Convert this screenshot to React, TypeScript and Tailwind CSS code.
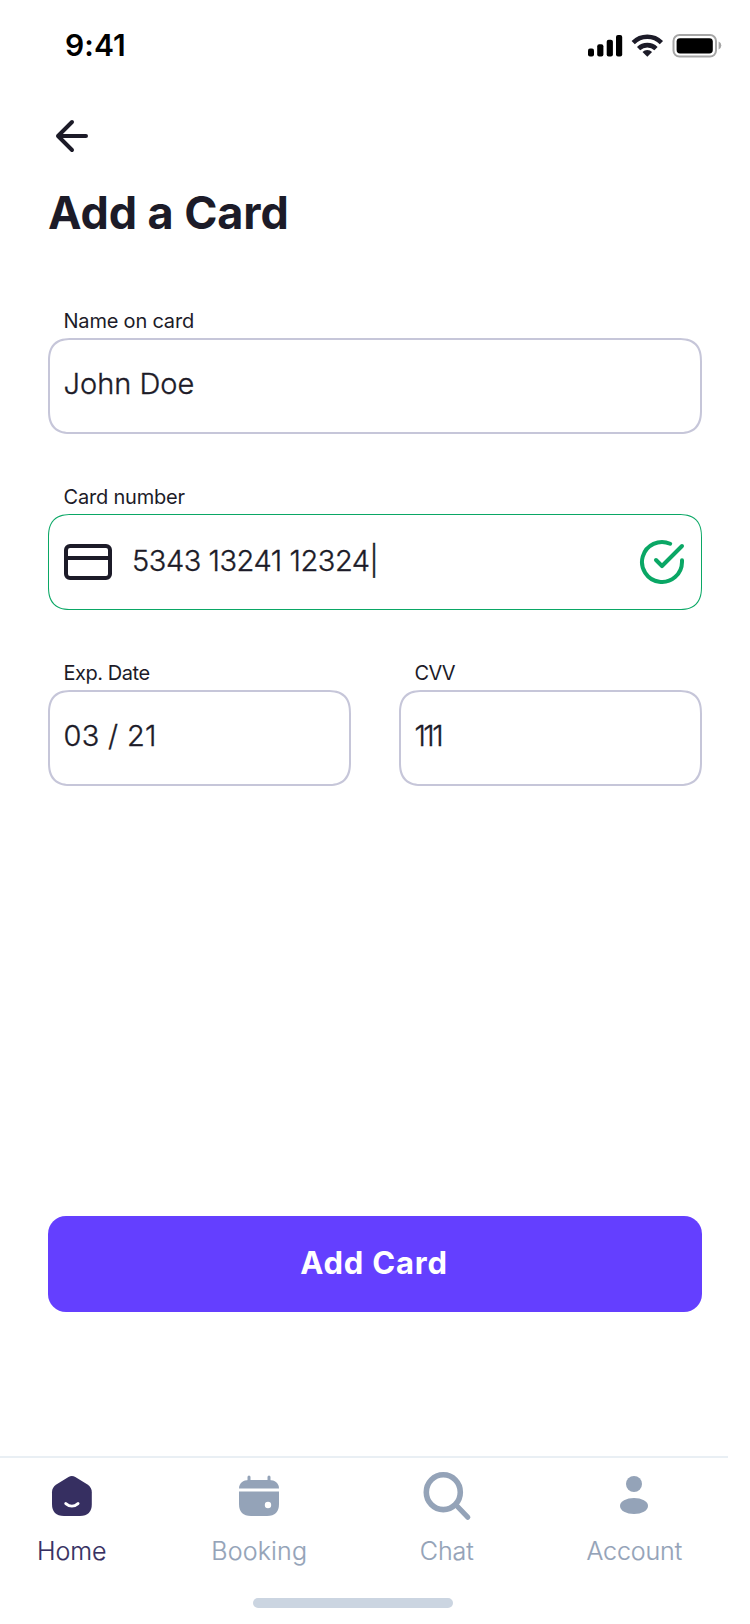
import type { ReactNode } from "react";

function StatusIcons() {
  return (
    <svg className="mt-0.5 h-6 w-[134px]" viewBox="588 34 134 24">
      <rect x="588" y="48.5" width="6" height="8" rx="2" />
      <rect x="597.2" y="44.2" width="6.2" height="12.3" rx="2" />
      <rect x="606.7" y="39.8" width="6.2" height="16.7" rx="2" />
      <rect x="616" y="35" width="6.2" height="21.5" rx="2" />
      <g fill="none" stroke="#1c1b28" strokeWidth="4.6">
        <path d="M633.2 42.6a20 20 0 0 1 28.2 0" />
        <path d="M638.6 48.6a12.5 12.5 0 0 1 17.4 0" />
      </g>
      <path d="M647.3 56.8l-4.8-4.8a6.6 6.6 0 0 1 9.6 0z" fill="#1c1b28" />
      <rect x="673.5" y="35" width="42.5" height="21.6" rx="6" fill="none" stroke="#a6a6a6" strokeWidth="2" />
      <rect x="676.6" y="38.2" width="36.2" height="15.2" rx="3.4" />
      <path d="M718.6 41.6a4.3 4.3 0 0 1 0 8z" fill="#a6a6a6" />
    </svg>
  );
}

function Field({ label, children, tracking = "-tracking-[0.2px]", box = "border-2 border-[#c6c6d9]", className = "" }: { label: string; children: ReactNode; tracking?: string; box?: string; className?: string }) {
  return (
    <div className={className}>
      <div className={`mb-1 pl-[15.5px] text-[20px] leading-[26px] ${tracking}`}>{label}</div>
      <div className={`flex h-24 items-center rounded-[24px] text-[29px] font-light [corner-shape:superellipse(1.4)] [-webkit-text-stroke:0.35px_currentColor] ${box}`}>{children}</div>
    </div>
  );
}

function Tab({ label, color = "text-[#94a3b8]", tracking = "tracking-normal", children }: { label: string; color?: string; tracking?: string; children: ReactNode }) {
  return (
    <div className={`flex w-[143.5px] flex-col items-center ${color}`}>
      <svg className="size-12 overflow-visible" viewBox="0 0 48 48" fill="currentColor">{children}</svg>
      <div className={`mt-[15px] text-[25px] leading-8 font-light whitespace-nowrap [-webkit-text-stroke:0.2px_currentColor] ${tracking}`}>{label}</div>
    </div>
  );
}

export default function App() {
  return (
    <div className="flex h-[1624px] w-[750px] flex-col overflow-hidden bg-white font-['Inter',sans-serif] text-[#1c1b28]">
      <header className="flex h-[90px] items-center justify-between pr-7 pl-[65px] text-black">
        <span className="text-[30px] leading-9 font-semibold tracking-[0.1px]">9:41</span>
        <StatusIcons />
      </header>

      <main className="flex flex-col px-12 pt-[22px]">
        <svg className="size-12" viewBox="0 0 24 24" fill="none" stroke="currentColor" strokeWidth="2" strokeLinecap="round" strokeLinejoin="round">
          <path d="M19 12H5M12 19l-7-7 7-7" />
        </svg>
        <h1 className="mt-[25px] text-[45px] leading-[56px] font-bold -tracking-[0.1px]">Add a Card</h1>

        <Field label="Name on card" className="mt-[67px]">
          <span className="pb-[5px] pl-[13.5px]">John Doe</span>
        </Field>

        <Field label="Card number" className="mt-[50px]" box="border border-[#0aa765]">
          <svg className="ml-[15px] size-12" viewBox="0 0 24 24" fill="none" stroke="currentColor" strokeWidth="2" strokeLinejoin="round">
            <rect x="1" y="4" width="22" height="16" rx="2" />
            <path d="M1 10h22" />
          </svg>
          <span className="grow pb-0.5 pl-5 -tracking-[0.45px]">5343 13241 12324|</span>
          <svg className="mr-[15px] size-12 text-[#0aa765]" viewBox="0 0 24 24" fill="none" stroke="currentColor" strokeWidth="2" strokeLinecap="round" strokeLinejoin="round">
            <path d="M22 11.08V12a10 10 0 1 1-5.93-9.14" />
            <path d="M22 4 12 14.01l-3-3" />
          </svg>
        </Field>

        <div className="mt-[50px] grid grid-cols-2 gap-12">
          <Field label="Exp. Date" tracking="-tracking-[0.45px]">
            <span className="pb-1 pl-[13.5px] tracking-[0.3px]">03 / 21</span>
          </Field>
          <Field label="CVV" tracking="-tracking-[0.7px]">
            <span className="pb-1 pl-[13.5px] -tracking-[2.6px]">111</span>
          </Field>
        </div>

        <button className="mt-[430px] h-24 rounded-[18px] bg-[#643fff] pr-0.5 pb-0.5 text-[31px] font-bold tracking-[0.8px] text-white">Add Card</button>
      </main>

      <nav className="mt-36 w-[728px] border-t-2 border-[#e9eff4] pt-3.5">
        <div className="flex gap-11">
          <Tab label="Home" color="text-[#362f61]">
            <path d="M20.5 4.9 Q23.9 3 27.3 4.9 L39.5 12.6 Q43.8 15.6 43.8 20.2 V32 Q43.8 44 31.8 44 H16 Q4 44 4 32 V20.2 Q4 15.6 8.3 12.6Z" />
            <path d="M17.8 31.6c3.6 3.2 8.6 3.2 12.2 0" fill="none" stroke="#fff" strokeWidth="3" strokeLinecap="round" />
          </Tab>
          <Tab label="Booking" tracking="tracking-[0.2px]">
            <path d="M14 5v5M34 5v5" stroke="currentColor" strokeWidth="3" strokeLinecap="round" />
            <path d="M4 16.6C4 11 8 8 14 8H34C40 8 44 11 44 16.6Z" />
            <path fillRule="evenodd" d="M4 19.6H44V32Q44 44 32 44H16Q4 44 4 32ZM33 29.8a3.2 3.2 0 1 0 0 6.4a3.2 3.2 0 1 0 0-6.4Z" />
          </Tab>
          <Tab label="Chat">
            <g fill="none" stroke="currentColor">
              <ellipse cx="20.3" cy="20.2" rx="17" ry="17.4" strokeWidth="5.6" />
              <path d="M33.5 33.5 44.8 45.2" strokeWidth="5.2" strokeLinecap="round" />
            </g>
          </Tab>
          <Tab label="Account" tracking="-tracking-[0.1px]">
            <circle cx="24" cy="12" r="8" />
            <ellipse cx="24" cy="34" rx="14" ry="8" />
          </Tab>
        </div>
        <div className="mt-[31px] ml-[253px] h-2.5 w-[200px] rounded-full bg-[#cbd5e1]" />
      </nav>
    </div>
  );
}
